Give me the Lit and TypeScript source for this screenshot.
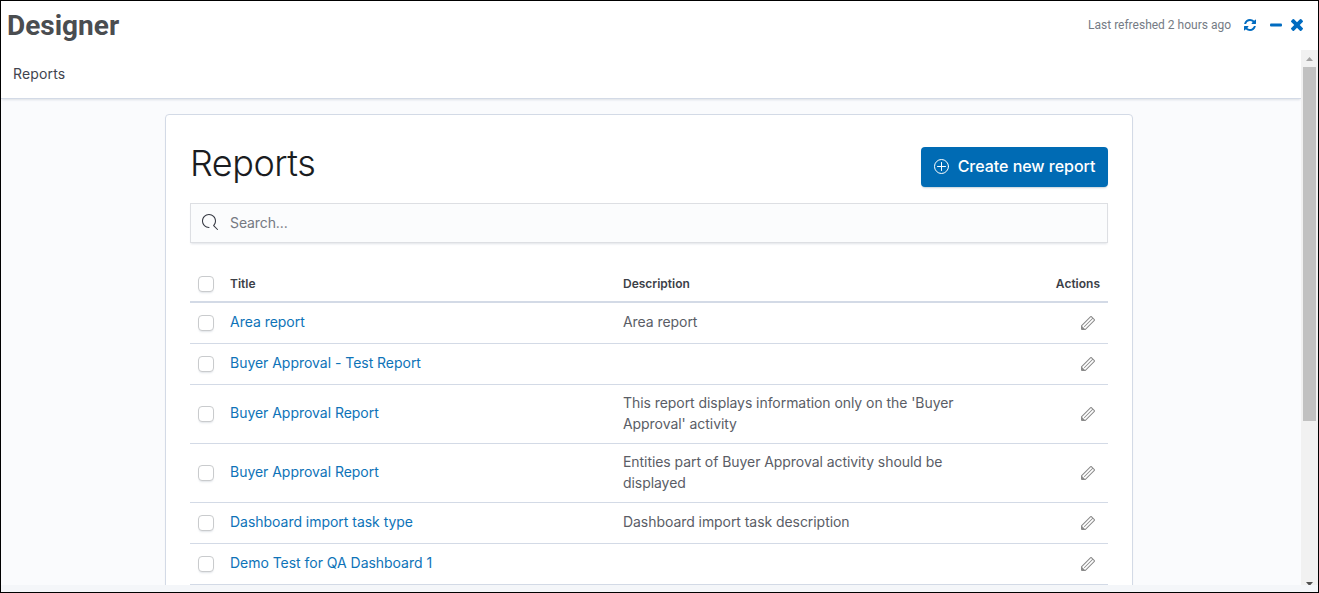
import { LitElement, html, css, svg } from "lit";
import { customElement } from "lit/decorators.js";

interface Report {
  title: string;
  description: string;
}

const reports: Report[] = [
  { title: "Area report", description: "Area report" },
  { title: "Buyer Approval - Test Report", description: "" },
  { title: "Buyer Approval Report", description: "This report displays information only on the 'Buyer Approval' activity" },
  { title: "Buyer Approval Report", description: "Entities part of Buyer Approval activity should be displayed" },
  { title: "Dashboard import task type", description: "Dashboard import task description" },
  { title: "Demo Test for QA Dashboard 1", description: "" },
];

const refreshIcon = html`<svg class="refresh" width="12" height="12" viewBox="0 128 1536 1536" fill="currentColor">${svg`<path d="M1511 1056q0 5-1 7-64 268-268 434.5t-478 166.5q-146 0-282.5-55t-243.5-157l-129 129q-19 19-45 19t-45-19-19-45v-448q0-26 19-45t45-19h448q26 0 45 19t19 45-19 45l-137 137q71 66 161 102t187 36q134 0 250-65t186-179q11-17 53-117 8-23 30-23h192q13 0 22.500 9.500t9.500 22.500zm25-800v448q0 26-19 45t-45 19h-448q-26 0-45-19t-19-45 19-45l138-138q-148-137-349-137-134 0-250 65t-186 179q-11 17-53 117-8 23-30 23h-199q-13 0-22.500-9.500t-9.500-22.500v-7q65-268 270-434.500t480-166.500q146 0 284 55.500t245 156.500l130-129q19-19 45-19t45 19 19 45z"/>`}</svg>`;

const minusIcon = html`<svg class="minus" width="12" height="12" viewBox="0 0 12 12" fill="currentColor"><rect x="0" y="4.500" width="12" height="3" rx="1"/></svg>`;

const closeIcon = html`<svg class="close" width="12" height="12" viewBox="110 366 1188 1188" fill="currentColor"><path d="M1298 1322q0 40-28 68l-136 136q-28 28-68 28t-68-28l-294-294-294 294q-28 28-68 28t-68-28l-136-136q-28-28-28-68t28-68l294-294-294-294q-28-28-28-68t28-68l136-136q28-28 68-28t68 28l294 294 294-294q28-28 68-28t68 28l136 136q28 28 28 68t-28 68l-294 294 294 294q28 28 28 68z"/></svg>`;

const plusIcon = html`<svg width="16" height="16" viewBox="0 0 16 16" fill="none" stroke="currentColor" stroke-linecap="round"><circle cx="7.500" cy="7.500" r="7"/><path d="M7.500 3.500v8M3.500 7.500h8"/></svg>`;

const searchIcon = html`<svg width="16" height="16" viewBox="0 0 16 16" fill="currentColor"><path d="M11.271 11.978l3.872 3.873a.502.502 0 00.708 0 .502.502 0 000-.708l-3.565-3.564c2.380-2.747 2.267-6.923-.342-9.532-2.730-2.730-7.170-2.730-9.898 0-2.728 2.729-2.728 7.170 0 9.900a6.955 6.955 0 004.949 2.050.5.5 0 000-1 5.960 5.960 0 01-4.242-1.757 6.010 6.010 0 010-8.486 6.004 6.004 0 018.484 0 6.010 6.010 0 010 8.486.5.5 0 00.034.738z"/></svg>`;

const pencilIcon = html`<svg width="16" height="16" viewBox="0 0 16 16" fill="currentColor"><path d="M12.148 3.148L11 2l-9 9v3h3l9-9-1.144-1.144-8.002 7.998a.502.502 0 01-.708 0 .502.502 0 010-.708l8.002-7.998zM11 1c.256 0 .512.098.707.293l3 3a.999.999 0 010 1.414l-9 9A.997.997 0 015 15H2a1 1 0 01-1-1v-3c0-.265.105-.52.293-.707l9-9A.997.997 0 0111 1zM5 14H2v-3l3 3z"/></svg>`;

@customElement("report-table")
class ReportTable extends LitElement {
  static styles = css`
    :host { display: block; }
    .row {
      display: grid;
      grid-template-columns: 32px 393px 1fr auto;
      align-items: center;
      border-bottom: 1px solid #d3dae6;
      font-size: 14px;
      line-height: 21px;
      letter-spacing: -0.03px;
      min-height: 41px;
      box-sizing: border-box;
    }
    .head {
      border-bottom-width: 2px;
      font-size: 12px;
      font-weight: 600;
      line-height: 18px;
      letter-spacing: 0;
      color: #3c3f48;
      min-height: 38px;
    }
    .cell { padding: 8px; }
    .head .cell { padding: 10px 8px 8px; }
    .title { color: #0e73b8; padding: 7px 8px 9px; }
    .desc { max-width: 344px; color: #5a5d66; padding: 6.6px 0 9.4px 8px; letter-spacing: -0.06px; }
    .action { display: flex; padding-right: 12px; color: #8a8a8a; }
    .box {
      width: 16px;
      height: 16px;
      margin-left: 8px;
      box-sizing: border-box;
      border: 1px solid #c9cbcd;
      border-radius: 4px;
      background: #fff;
      box-shadow: 0 2px 2px -1px rgba(152, 162, 179, 0.3);
    }
    .head .box { margin-top: 2px; }
    .title { padding: 6.6px 8px 9.4px; }
  `;

  render() {
    return html`
      <div class="row head">
        <div class="box"></div>
        <div class="cell">Title</div>
        <div class="cell">Description</div>
        <div class="cell">Actions</div>
      </div>
      ${reports.map(
        (r) => html`<div class="row">
          <div class="box"></div>
          <div class="cell title">${r.title}</div>
          <div class="cell desc">${r.description}</div>
          <div class="action">${pencilIcon}</div>
        </div>`
      )}
    `;
  }
}

@customElement("app-root")
class AppRoot extends LitElement {
  static styles = css`
    :host {
      display: flex;
      flex-direction: column;
      box-sizing: border-box;
      height: 593px;
      border: 1px solid #000;
      background: #fff;
      overflow: hidden;
      font-family: Inter, sans-serif;
      color: #343741;
    }
    .top {
      flex: none;
      height: 49px;
      display: flex;
      align-items: center;
      justify-content: space-between;
      padding: 0 15px 0 6px;
      font-family: Roboto, sans-serif;
    }
    .name { font-size: 28px; font-weight: 700; line-height: 48px; color: #4a4d50; }
    .tools { display: flex; align-items: center; padding-bottom: 2px; color: #006bc0; }
    .stamp { font-size: 12px; color: #757b85; }
    .refresh { margin-left: 13px; }
    .minus { margin-left: 14px; }
    .close { margin-left: 9px; }
    .body { flex: 1; min-height: 0; display: flex; }
    .page { flex: 1; min-width: 0; overflow: hidden; background: #fafbfd; }
    .nav {
      height: 49px;
      box-sizing: border-box;
      display: flex;
      align-items: center;
      padding: 0 0 2px 12px;
      font-size: 14px;
      letter-spacing: 0.15px;
      color: #41444e;
      background: #fff;
      border-bottom: 1px solid #d3dae6;
      box-shadow: 0 2px 2px -1px rgba(152, 162, 179, 0.3);
    }
    .panel {
      box-sizing: border-box;
      width: 968px;
      height: 900px;
      margin: 15px 0 0 164px;
      padding: 32px 24px 24px;
      background: #fff;
      border: 1px solid #d3dae6;
      border-radius: 4px;
      box-shadow: 0 2px 2px -1px rgba(152, 162, 179, 0.3);
    }
    .heading { display: flex; justify-content: space-between; height: 40px; }
    .h1 { margin: 0; font-size: 36px; font-weight: 300; line-height: 32px; letter-spacing: -0.5px; color: #1a1c21; }
    .create {
      display: flex;
      align-items: center;
      justify-content: center;
      gap: 8px;
      box-sizing: border-box;
      width: 187px;
      height: 40px;
      border-radius: 4px;
      background: #006bb4;
      color: #fff;
      font-size: 16px;
      font-weight: 500;
      letter-spacing: -0.03px;
      box-shadow: 0 2px 2px -1px rgba(54, 97, 126, 0.3);
    }
    .create span { padding-bottom: 2px; }
    .search {
      display: flex;
      align-items: center;
      gap: 12px;
      box-sizing: border-box;
      height: 40px;
      margin: 16px 0 22px;
      padding: 0 0 2px 11px;
      border: 1px solid #dddfe3;
      background: #fbfcfd;
      box-shadow: 0 2px 2px -1px rgba(152, 162, 179, 0.3);
      font-size: 14px;
    }
    .hint { color: #757982; letter-spacing: -0.1px; }
    .track {
      flex: none;
      width: 17px;
      background: #f1f1f1;
      display: flex;
      flex-direction: column;
      align-items: center;
      overflow: hidden;
    }
    .arrow { flex: none; display: block; }
    .thumb { flex: none; width: 13px; height: 354px; background: #c1c1c1; }
    .down { margin-top: 160px; }
    .foot { flex: none; height: 7px; background: #f4f6f9; }
  `;

  render() {
    return html`
      <div class="top">
        <div class="name">Designer</div>
        <div class="tools">
          <span class="stamp">Last refreshed 2 hours ago</span>
          ${refreshIcon}${minusIcon}${closeIcon}
        </div>
      </div>
      <div class="body">
        <div class="page">
          <div class="nav">Reports</div>
          <div class="panel">
            <div class="heading">
              <h1 class="h1">Reports</h1>
              <div class="create">${plusIcon}<span>Create new report</span></div>
            </div>
            <div class="search">${searchIcon}<span class="hint">Search...</span></div>
            <report-table></report-table>
          </div>
        </div>
        <div class="track">
          <svg class="arrow" width="17" height="17" viewBox="0 0 17 17" fill="#a3a3a3"><path d="M5 11h7L8.500 7z"/></svg>
          <div class="thumb"></div>
          <svg class="arrow down" width="17" height="17" viewBox="0 0 17 17" fill="#505050"><path d="M5 1h7L8.500 5z"/></svg>
        </div>
      </div>
      <div class="foot"></div>
    `;
  }
}
